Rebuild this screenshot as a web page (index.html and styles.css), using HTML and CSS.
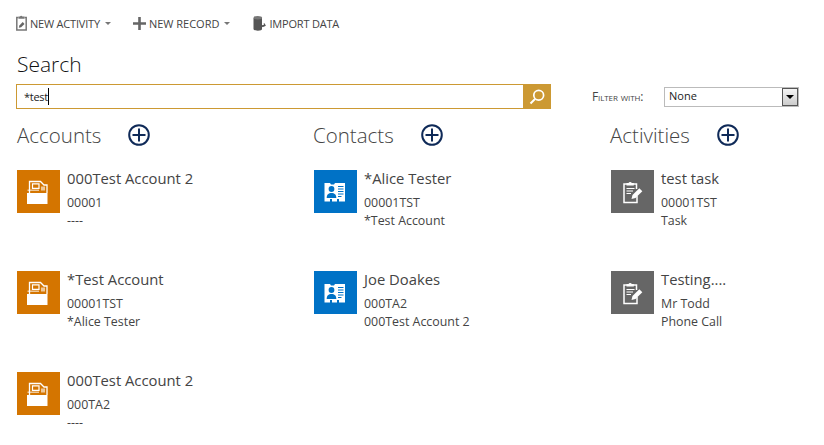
FILE: index.html
```html
<!DOCTYPE html>
<html lang="en">
<head>
    <meta charset="UTF-8">
    <meta name="viewport" content="width=device-width, initial-scale=1.0">
    <title>Search</title>
    <link rel="stylesheet" href="styles.css">
</head>
<body>
    <svg class="defs" width="0" height="0" aria-hidden="true">
        <symbol id="tile-account" viewBox="0 0 43 43">
            <path d="M12.500 23V11.500h11l3.500 3.500h3v8" fill="none" stroke="#fff" stroke-width="1.300"/>
            <path d="M15.500 13.800h6.500v4.500h-6.500z" fill="none" stroke="#fff" stroke-width="1.200"/>
            <path d="M10.500 19.500h11.500v1.500h-11.500zM24 16.500h4v4h-4z" fill="#fff" opacity="0.6"/>
            <path d="M10 23h20.500v11H10z" fill="#fff"/>
        </symbol>
        <symbol id="tile-contact" viewBox="0 0 43 43">
            <path d="M10.500 13h5.500l1 1.500h3l1-1.500h10v18.500h-6v-2.500h-2v2.500h-5v-2.500h-2v2.500h-5.500z" fill="#fff"/>
            <circle cx="17.500" cy="19" r="2.900" fill="#0072c6"/>
            <path d="M12.700 28c0-3.600 1.800-5 4.800-5s4.800 1.400 4.800 5z" fill="#0072c6"/>
            <path d="M24 16.500h5.500M24 19h5.500M24 21.500h5.500M24 24h5.500M24 26.500h3.500" stroke="#0072c6" stroke-width="1"/>
        </symbol>
        <symbol id="tile-activity" viewBox="0 0 43 43">
            <path d="M16 14h-3v18.500h13V26" fill="none" stroke="#fff" stroke-width="1.500"/>
            <path d="M22 14h3.500v5" fill="none" stroke="#fff" stroke-width="1.500"/>
            <path d="M15.500 15.500v-2.500h2a1.800 1.800 0 0 1 3.300 0h2v2.500z" fill="#fff"/>
            <path d="M15.500 18.500h8M15.500 21h6.500M15.500 23.500h4.500" stroke="#fff" stroke-width="1.200"/>
            <path d="M20.500 29l1-3.900 6.800-6.800 3 3-6.800 6.800z" fill="#fff"/>
        </symbol>
        <symbol id="add-circle" viewBox="0 0 22 22">
            <circle cx="11" cy="11" r="9.800" fill="none" stroke="#0f2a58" stroke-width="2"/>
            <path d="M4.500 11h13M11 4.500v13" stroke="#0f2a58" stroke-width="2"/>
        </symbol>
    </svg>

    <div class="command-bar">
        <a class="command">
            <svg class="command-icon" width="11" height="16" viewBox="0 0 11 16">
                <path d="M2.500 2.500H.8V15h9.400V2.500H8.500" fill="none" stroke="#777" stroke-width="1.500"/>
                <path d="M2.500 3.800V1.500h1.500a1.300 1.300 0 0 1 2.400 0h2.100v2.300z" fill="#777"/>
                <path d="M2.800 12.800l.6-2.400 3.300-3.300 1.800 1.800-3.300 3.300z" fill="#666"/>
            </svg>
            NEW ACTIVITY<span class="caret"></span>
        </a>
        <a class="command wide">
            <svg class="command-icon" width="13" height="13" viewBox="0 0 13 13">
                <path d="M0 6.500h13M6.500 0v13" stroke="#666" stroke-width="2.600"/>
            </svg>
            NEW RECORD<span class="caret"></span>
        </a>
        <a class="command">
            <svg class="command-icon" width="13" height="16" viewBox="0 0 13 16">
                <path d="M.5 3v11c0 1 1.600 1.700 4.300 1.700s4.200-.7 4.200-1.700V3z" fill="#555"/>
                <ellipse cx="4.800" cy="2.700" rx="4.300" ry="1.700" fill="#777"/>
                <path d="M7.500 13.500c.5-2 1.800-3 4-3M11 8.500l1 2-2 1" fill="none" stroke="#555" stroke-width="1.300"/>
            </svg>
            IMPORT DATA
        </a>
    </div>

    <h1 class="page-title">Search</h1>

    <div class="search-row">
        <div class="search-box">
            <div class="search-field"><span class="search-text">*test</span></div>
            <button class="search-button">
                <svg width="16" height="16" viewBox="0 0 16 16">
                    <circle cx="9.700" cy="6.300" r="4.900" fill="none" stroke="#fff" stroke-width="1.700"/>
                    <path d="M6 10l-4.500 4.500" stroke="#fff" stroke-width="2"/>
                </svg>
            </button>
        </div>
        <div class="filter">
            <span class="filter-label">Filter with:</span>
            <div class="filter-select">
                <span class="filter-value">None</span>
                <span class="filter-arrow"></span>
            </div>
        </div>
    </div>

    <div class="results">
        <section class="result-column">
            <div class="column-head first">
                <h2>Accounts</h2>
                <svg class="add-icon" width="22" height="22"><use href="#add-circle"/></svg>
            </div>
            <div class="result">
                <svg class="tile account" width="43" height="43"><use href="#tile-account"/></svg>
                <div class="result-text">
                    <div class="result-name">000Test Account 2</div>
                    <div class="result-line first">00001</div>
                    <div class="result-line">----</div>
                </div>
            </div>
            <div class="result">
                <svg class="tile account" width="43" height="43"><use href="#tile-account"/></svg>
                <div class="result-text">
                    <div class="result-name">*Test Account</div>
                    <div class="result-line first">00001TST</div>
                    <div class="result-line">*Alice Tester</div>
                </div>
            </div>
            <div class="result">
                <svg class="tile account" width="43" height="43"><use href="#tile-account"/></svg>
                <div class="result-text">
                    <div class="result-name">000Test Account 2</div>
                    <div class="result-line first">000TA2</div>
                    <div class="result-line">----</div>
                </div>
            </div>
        </section>

        <section class="result-column">
            <div class="column-head">
                <h2>Contacts</h2>
                <svg class="add-icon" width="22" height="22"><use href="#add-circle"/></svg>
            </div>
            <div class="result">
                <svg class="tile contact" width="43" height="43"><use href="#tile-contact"/></svg>
                <div class="result-text">
                    <div class="result-name">*Alice Tester</div>
                    <div class="result-line first">00001TST</div>
                    <div class="result-line">*Test Account</div>
                </div>
            </div>
            <div class="result">
                <svg class="tile contact" width="43" height="43"><use href="#tile-contact"/></svg>
                <div class="result-text">
                    <div class="result-name">Joe Doakes</div>
                    <div class="result-line first">000TA2</div>
                    <div class="result-line">000Test Account 2</div>
                </div>
            </div>
        </section>

        <section class="result-column last">
            <div class="column-head">
                <h2>Activities</h2>
                <svg class="add-icon" width="22" height="22"><use href="#add-circle"/></svg>
            </div>
            <div class="result">
                <svg class="tile activity" width="43" height="43"><use href="#tile-activity"/></svg>
                <div class="result-text">
                    <div class="result-name">test task</div>
                    <div class="result-line first">00001TST</div>
                    <div class="result-line">Task</div>
                </div>
            </div>
            <div class="result">
                <svg class="tile activity" width="43" height="43"><use href="#tile-activity"/></svg>
                <div class="result-text">
                    <div class="result-name">Testing....</div>
                    <div class="result-line first">Mr Todd</div>
                    <div class="result-line">Phone Call</div>
                </div>
            </div>
        </section>
    </div>
</body>
</html>
```

FILE: styles.css
```css
body {
    margin: 0;
    padding: 0 0 0 16px;
    font-family: "Open Sans", "Noto Sans", sans-serif;
    color: #444;
    background-color: white;
}

.defs {
    display: none;
}

/* Command bar */
.command-bar {
    display: flex;
    align-items: center;
    height: 16px;
    padding-top: 15px;
}

.command {
    display: flex;
    align-items: center;
    font-size: 11px;
    letter-spacing: -0.2px;
    color: #444;
    margin-right: 22px;
}

.command.wide {
    letter-spacing: 0;
    margin-right: 23px;
}

.command-icon {
    margin-right: 3px;
}

.caret {
    width: 0;
    height: 0;
    margin-left: 5px;
    border-left: 3px solid transparent;
    border-right: 3px solid transparent;
    border-top: 3px solid #777;
}

.page-title {
    margin: 19px 0 0 1px;
    font-size: 21px;
    line-height: 29px;
    font-weight: 300;
    color: #111;
}

/* Search row */
.search-row {
    display: flex;
    align-items: center;
    margin-top: 5px;
    height: 25px;
}

.search-box {
    display: flex;
    width: 535px;
    height: 25px;
}

.search-field {
    flex: 1;
    border: 1px solid #cc9933;
    border-right: none;
    padding-left: 7px;
    font-size: 11px;
    line-height: 23px;
    color: #222;
}

.search-text {
    border-right: 1px solid #000;
    display: inline-block;
    line-height: 17px;
    letter-spacing: -0.3px;
}

.search-button {
    width: 28px;
    padding: 0;
    border: none;
    background-color: #cc9933;
    display: flex;
    align-items: center;
    justify-content: center;
}

.filter {
    display: flex;
    align-items: center;
    margin-left: 41px;
}

.filter-label {
    font-size: 12px;
    font-variant: small-caps;
    letter-spacing: -0.1px;
    width: 72px;
    color: #444;
}

.filter-select {
    display: flex;
    align-items: center;
    justify-content: space-between;
    box-sizing: border-box;
    width: 135px;
    height: 20px;
    border: 1px solid #bbb;
    padding-left: 4px;
    font-size: 11px;
    line-height: 16px;
    color: #222;
}

.filter-value {
    padding-bottom: 2px;
}

.filter-arrow {
    width: 16px;
    height: 18px;
    box-sizing: border-box;
    border: 1px solid #555;
    background: linear-gradient(#f4f4f4, #ccc);
    position: relative;
}

.filter-arrow::after {
    content: "";
    position: absolute;
    left: 3px;
    top: 6px;
    border-left: 4px solid transparent;
    border-right: 4px solid transparent;
    border-top: 4px solid #000;
}

/* Results */
.results {
    display: flex;
    margin-top: 12px;
    margin-left: 1px;
}

.result-column {
    width: 297px;
    flex: none;
}

.result-column.last {
    width: 190px;
}

.column-head {
    display: flex;
    align-items: center;
    height: 28px;
    margin-bottom: 21px;
    margin-left: -1px;
}

.column-head.first {
    margin-left: 0;
}

.column-head h2 {
    margin: 0 27px 0 0;
    font-size: 20.500px;
    font-weight: 300;
    color: #444;
}

.result {
    display: flex;
    height: 101px;
}

.result:last-child {
    height: auto;
}

.tile {
    flex: none;
    margin-right: 7px;
}

.account {
    background-color: #d47500;
}

.contact {
    background-color: #0072c6;
}

.activity {
    background-color: #666;
}

.result-text {
    margin-top: -2px;
}

.result-name {
    font-size: 14.800px;
    line-height: 20px;
    color: #444;
}

.result-line {
    font-size: 12.400px;
    line-height: 18px;
    color: #444;
}

.result-line.first {
    margin-top: 6px;
}
```
